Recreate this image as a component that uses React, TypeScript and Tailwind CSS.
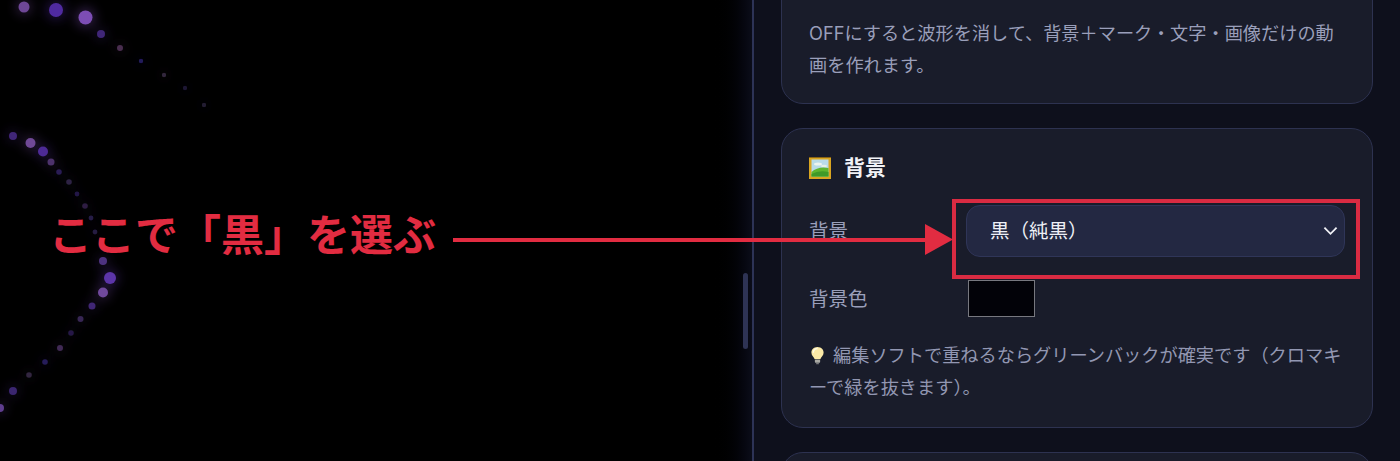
import React from "react";

const font = { fontFamily: '"Inter", "Noto Sans CJK JP", sans-serif' };

const dots: [number, number, number, string][] = [
  [24, 7, 5.5, "#6e4696"], [56, 10, 7, "#4f2ba0"], [85.5, 17.5, 7, "#7c4eb4"], [101, 34, 4, "#3f2678"],
  [120, 48, 3, "#4a2e50"], [141, 61, 2.2, "#241a5c"], [164, 75, 2.2, "#32253c"], [185, 88, 2.2, "#1c1534"], [204, 105, 2.2, "#241c32"],
  [13, 136, 4, "#402578"], [30.5, 143, 5, "#704896"], [43, 151.5, 5, "#4e2a96"], [51, 162, 3.5, "#4e336c"],
  [59, 172, 2.8, "#291c54"], [69, 182, 2.8, "#2d2244"], [77, 194, 2.4, "#221946"], [85, 206, 2.8, "#2d1f42"],
  [91, 218, 2.4, "#261b46"], [95, 232, 2.4, "#251b42"], [103, 261, 4, "#4e3380"], [110, 278, 6, "#5c34a8"],
  [103, 292.5, 5, "#70489c"], [92, 306, 3.5, "#412774"], [80.5, 319, 3, "#372554"], [71, 333, 2.8, "#251946"],
  [60, 348, 3, "#412a54"], [45, 362, 2.8, "#281b5a"], [29, 375, 2.8, "#332540"], [13, 391, 4, "#3a2570"], [0, 408, 4, "#5e3d8e"],
];

function Wave() {
  return (
    <svg width="711" height="461" viewBox="0 0 711 461" className="block">
      <defs>
        <filter id="glow" x="-300%" y="-300%" width="700%" height="700%">
          <feGaussianBlur stdDeviation="6" />
        </filter>
        <filter id="soft" x="-50%" y="-50%" width="200%" height="200%">
          <feGaussianBlur stdDeviation="0.6" />
        </filter>
      </defs>
      <g filter="url(#glow)" opacity="0.4">
        {dots.map(([x, y, r, c], i) => (
          <circle key={i} cx={x} cy={y} r={r * 1.4} fill={c} />
        ))}
      </g>
      <g filter="url(#soft)">
        {dots.map(([x, y, r, c], i) => (
          <circle key={i} cx={x} cy={y} r={r} fill={c} />
        ))}
      </g>
    </svg>
  );
}

function PictureEmoji() {
  return (
    <svg width="22" height="22" viewBox="0 0 22 22" className="shrink-0">
      <rect x="0" y="0" width="22" height="22" fill="#d9a520" />
      <rect x="0" y="0" width="22" height="1" fill="#8a6414" />
      <rect x="2.5" y="2.5" width="17" height="17" fill="#b9dbe8" />
      <ellipse cx="9" cy="7" rx="4" ry="1.6" fill="#eef4ee" />
      <ellipse cx="15" cy="9" rx="3" ry="1.2" fill="#e4efe6" />
      <path d="M2.5 15 Q9 9 19.5 11 V19.5 H2.5 Z" fill="#5fb52f" />
      <path d="M2.5 17 Q10 13 19.5 15 V19.5 H2.5 Z" fill="#3f9a28" />
    </svg>
  );
}

function Bulb() {
  return (
    <svg width="15" height="19" viewBox="0 0 16 20" className="shrink-0">
      <path d="M8 1 C3.8 1 1.5 4 1.5 7 C1.5 10 4.4 11.5 5 14 H11 C11.6 11.5 14.5 10 14.5 7 C14.5 4 12.2 1 8 1 Z" fill="#fbe9a6" />
      <path d="M8 2.5 C5.5 2.5 3.5 4.4 3.5 7" stroke="#fffbe6" strokeWidth="1.5" fill="none" />
      <rect x="5.2" y="14.4" width="5.6" height="3.4" rx="0.8" fill="#a9a9a4" />
      <rect x="6.4" y="18" width="3.2" height="1.4" rx="0.7" fill="#77777a" />
    </svg>
  );
}

export default function App() {
  return (
    <div className="relative flex h-[461px] w-[1400px] overflow-hidden bg-black" style={font}>
      <div className="w-[711px] shrink-0">
        <Wave />
      </div>

      <div className="flex w-[41px] shrink-0 justify-end bg-gradient-to-r from-[#000000] to-[#0b0d19] pr-[4px]">
        <div className="mt-[273px] h-[76px] w-[5px] rounded-full bg-[#2e3354]" />
      </div>

      <div className="flex w-[648px] shrink-0 flex-col gap-[24px] border-l-2 border-[#2d3356] bg-[#0e101c] pl-[27px] pr-[27px]">
        <div className="-mt-[120px] h-[224px] shrink-0 rounded-[22px] border border-[#2d3250] bg-[#191c2a] px-[27px] pt-[136px]">
          <p className="text-[18.2px] leading-[32px] text-[#9a9fba]">
            OFFにすると波形を消して、背景＋マーク・文字・画像だけの動画を作れます。
          </p>
        </div>

        <div className="h-[300px] shrink-0 rounded-[22px] border border-[#2d3250] bg-[#191c2a] px-[27px] pt-[28px]">
          <div className="flex h-[22px] items-center gap-[13px]">
            <PictureEmoji />
            <span className="text-[21px] font-bold text-[#f1f2f7]">背景</span>
          </div>

          <div className="mt-[26px] flex h-[52px] items-center">
            <span className="w-[157px] shrink-0 pt-[2px] text-[19.5px] text-[#9a9fba]">背景</span>
            <div className="flex h-[52px] w-[379px] items-center justify-between rounded-[14px] border border-[#2f3558] bg-[#232842] pl-[23px] pr-[6px]">
              <span className="pt-[1px] text-[19.5px] text-[#eef0f6]">黒（純黒）</span>
              <svg width="15" height="10" viewBox="0 0 16 10" fill="none" stroke="#f0f1f6" strokeWidth="1.9">
                <path d="M1.5 1.5 L8 8 L14.5 1.5" />
              </svg>
            </div>
          </div>

          <div className="mt-[23px] flex h-[37px] items-center">
            <span className="w-[159px] shrink-0 pt-[2px] text-[19.5px] text-[#9a9fba]">背景色</span>
            <div className="h-[37px] w-[67px] border-[1.5px] border-[#77787f] bg-[#020208]" />
          </div>

          <div className="mt-[22px] text-[18.2px] leading-[32px] text-[#9297b2]">
            <span className="ml-[1px] mr-[8px] inline-block align-[-3px]">
              <Bulb />
            </span>
            編集ソフトで重ねるならグリーンバックが確実です（クロマキーで緑を抜きます）。
          </div>
        </div>

        <div className="h-[100px] shrink-0 rounded-[22px] border border-[#2d3250] bg-[#191c2a]" />
      </div>

      {/* Annotation overlays */}
      <div className="absolute left-[49px] top-[205px] whitespace-nowrap text-[43px] font-bold leading-[60px] text-[#e22c41]">
        ここで「黒」を選ぶ
      </div>
      <div className="absolute left-[453px] top-[238px] h-[4px] w-[480px] bg-[#e22c41]" />
      <svg width="28" height="32" viewBox="0 0 28 32" className="absolute left-[925px] top-[224px]">
        <path d="M0 0 L28 15.5 L0 31 Z" fill="#e22c41" />
      </svg>
      <div className="absolute left-[952px] top-[199px] h-[80px] w-[408px] border-[4px] border-[#d92b42]" />
    </div>
  );
}
